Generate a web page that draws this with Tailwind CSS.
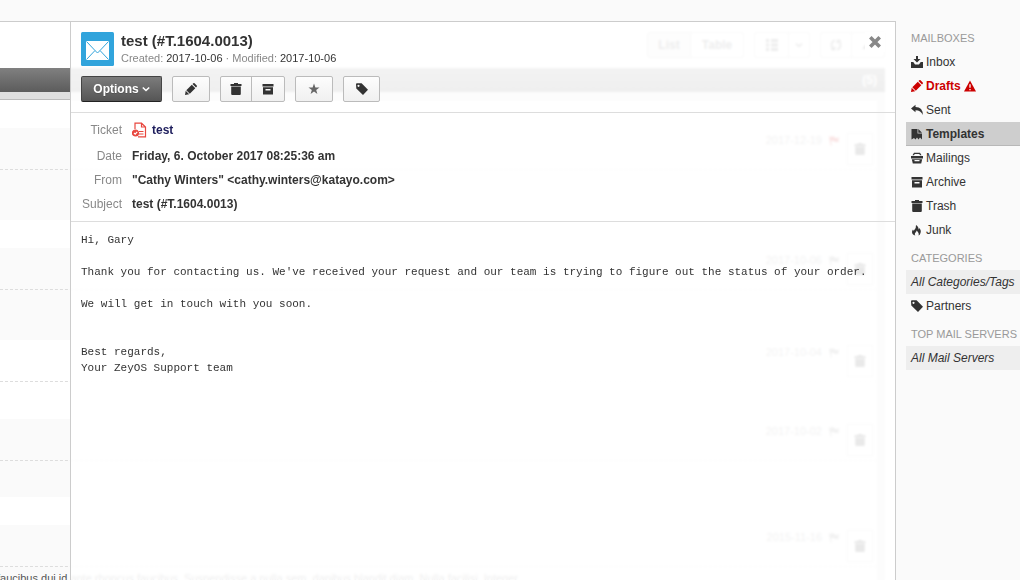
<!DOCTYPE html>
<html lang="en">

<head>
  <meta charset="UTF-8">
  <meta name="viewport" content="width=device-width, initial-scale=1.0">
  <title>test (#T.1604.0013)</title>
  <script src="https://cdn.jsdelivr.net/npm/@tailwindcss/browser@4"></script>
</head>

<body class="h-screen overflow-hidden bg-[#fafafa] font-['Liberation_Sans',Arial,sans-serif] text-xs text-[#333]">
  <!-- Icons -->
  <svg class="hidden">
    <symbol id="i-trash" viewBox="0 0 12 12">
      <path d="M4 0h4v1h3.500v2H.5V1H4zM1.200 3.600h9.600V11q0 1-1 1H2.200q-1 0-1-1z" />
    </symbol>
    <symbol id="i-archive" viewBox="0 0 12 12">
      <path fill-rule="evenodd" d="M.5 1h11v2.600H.5zM1 4.300h10V11.500H1zM3.500 6v1.500h5V6z" />
    </symbol>
    <symbol id="i-pencil" viewBox="0 0 12 12">
      <path d="M0 12l.7-4.200 3.500 3.500zM1.300 7.200L6.800 1.700l3.500 3.500-5.500 5.500zM7.500 1L8.300.3q.6-.6 1.300 0l2.100 2.100q.6.600 0 1.300l-.7.800z" />
    </symbol>
    <symbol id="i-tag" viewBox="0 0 12 12">
      <path fill-rule="evenodd" d="M0 1.300Q0 .3 1 .3h4.600L12 6.800 7 12 .3 5.500zM2.500 1.700a1.100 1.100 0 1 0 .01 0z" />
    </symbol>
    <symbol id="i-flag" viewBox="0 0 12 12">
      <path d="M0 1h1.500v.8Q4 0 6 1.800T11.500 2L10 5l1 1.500Q7.500 8 5.500 6.200 3.500 5 2.200 6.500L3 11H1.800z" />
    </symbol>
    <symbol id="i-chevron" viewBox="0 0 8 6">
      <path fill="none" stroke="currentColor" stroke-width="1.600" d="M.8 1.500L4 4.500l3.200-3" />
    </symbol>
  </svg>

  <div class="flex h-full pt-[21px]">
    <main class="relative min-w-0 flex-1 overflow-hidden border-t border-[#ccc] bg-white">
      <!-- Message list -->
      <div class="flex h-[46px] items-start justify-end gap-[10px] px-[11px] pt-[10px] font-bold text-[#444]">
        <div class="flex h-[26px] rounded-xs border border-[#bbb]">
          <button class="w-[43px] border-r border-[#bbb] bg-[#e8e8e8]">List</button>
          <button class="w-[52px]">Table</button>
        </div>
        <div class="flex h-[26px] rounded-xs border border-[#bbb]">
          <button class="flex w-[34px] items-center justify-center border-r border-[#bbb]" aria-label="View">
            <svg class="size-3" viewBox="0 0 12 12" fill="currentColor"><path d="M0 0h3v3H0zM5 0h7v3H5zM0 4.500h3v3H0zM5 4.500h7v3H5zM0 9h3v3H0zM5 9h7v3H5z" /></svg>
          </button>
          <button class="flex w-5 items-center justify-center" aria-label="More views"><svg class="h-[6px] w-2"><use href="#i-chevron" /></svg></button>
        </div>
        <div class="flex h-[26px] rounded-xs border border-[#bbb]">
          <button class="flex w-[31px] items-center justify-center border-r border-[#bbb]" aria-label="Refresh">
            <svg class="size-3" viewBox="0 0 12 12" fill="none" stroke="currentColor" stroke-width="1.600"><path d="M5 1.500Q1.500 2 1.500 6t2.500 4.500M1.500 10.500H4.500V7.500M7 10.500Q10.500 10 10.500 6T8 1.500M10.500 1.500H7.500v3" /></svg>
          </button>
          <button class="flex w-8 items-center justify-center" aria-label="Sort"><svg class="size-3" viewBox="0 0 12 12" fill="currentColor"><path d="M0 10l6-7 6 7z" /></svg></button>
        </div>
      </div>

      <div class="mr-[11px] flex h-6 items-center justify-end bg-linear-to-b from-[#808080] to-[#5c5c5c] pr-2 font-bold text-white">(5)</div>
      <div class="mr-[11px] bg-[#dfdfdf] pt-[7px] pr-2">
        <ul class="border-t border-[#bbb] bg-white">
          <li class="pt-7">
            <div class="bg-[#fafafa]">
              <div class="flex h-[42px] justify-end border-b border-dashed border-[#ddd] pt-1 pr-1 text-[11px] leading-4 text-[#777]">
                <time>2017-12-19</time>
                <svg class="mt-[3px] ml-[7px] h-3 w-[11px] fill-[#c00]"><use href="#i-flag" /></svg>
                <button class="mt-px ml-[7px] flex h-8 w-[26px] items-center justify-center border border-[#ccc] bg-white" aria-label="Delete"><svg class="size-3 fill-[#222]"><use href="#i-trash" /></svg></button>
              </div>
              <p class="h-[50px]"></p>
            </div>
          </li>
          <li class="pt-7">
            <div class="bg-[#fafafa]">
              <div class="flex h-[42px] justify-end border-b border-dashed border-[#ddd] pt-1 pr-1 text-[11px] leading-4 text-[#777]">
                <time>2017-10-06</time>
                <svg class="mt-[3px] ml-[7px] h-3 w-[11px] fill-[#777]"><use href="#i-flag" /></svg>
                <button class="mt-px ml-[7px] flex h-8 w-[26px] items-center justify-center border border-[#ccc] bg-white" aria-label="Delete"><svg class="size-3 fill-[#222]"><use href="#i-trash" /></svg></button>
              </div>
              <p class="h-[50px]"></p>
            </div>
          </li>
          <li>
            <div>
              <div class="flex h-[42px] justify-end border-b border-dashed border-[#ddd] pt-1 pr-1 text-[11px] leading-4 text-[#777]">
                <time>2017-10-04</time>
                <svg class="mt-[3px] ml-[7px] h-3 w-[11px] fill-[#777]"><use href="#i-flag" /></svg>
                <button class="mt-px ml-[7px] flex h-8 w-[26px] items-center justify-center border border-[#ccc] bg-white" aria-label="Delete"><svg class="size-3 fill-[#222]"><use href="#i-trash" /></svg></button>
              </div>
              <p class="h-[37px]"></p>
            </div>
          </li>
          <li>
            <div class="bg-[#fafafa]">
              <div class="flex h-[42px] justify-end border-b border-dashed border-[#ddd] pt-1 pr-1 text-[11px] leading-4 text-[#777]">
                <time>2017-10-02</time>
                <svg class="mt-[3px] ml-[7px] h-3 w-[11px] fill-[#777]"><use href="#i-flag" /></svg>
                <button class="mt-px ml-[7px] flex h-8 w-[26px] items-center justify-center border border-[#ccc] bg-white" aria-label="Delete"><svg class="size-3 fill-[#222]"><use href="#i-trash" /></svg></button>
              </div>
              <p class="h-9"></p>
            </div>
          </li>
          <li class="pt-7">
            <div class="bg-[#fafafa]">
              <div class="flex h-[42px] justify-end border-b border-dashed border-[#ddd] pt-1 pr-1 text-[11px] leading-4 text-[#777]">
                <time>2015-11-16</time>
                <svg class="mt-[3px] ml-[7px] h-3 w-[11px] fill-[#777]"><use href="#i-flag" /></svg>
                <button class="mt-px ml-[7px] flex h-8 w-[26px] items-center justify-center border border-[#ccc] bg-white" aria-label="Delete"><svg class="size-3 fill-[#222]"><use href="#i-trash" /></svg></button>
              </div>
              <p class="-ml-[3px] pt-[3px] text-[11px] leading-4 text-[#555]">faucibus dui id ante rhoncus faucibus. Suspendisse a nulla sem, dapibus blandit diam. Nulla facilisi. Integer…</p>
            </div>
          </li>
        </ul>
      </div>

      <!-- Opened message -->
      <article class="absolute inset-y-0 right-0 left-[70px] border-x border-[#ccc] bg-white/90 backdrop-blur-[1px]">
        <header class="relative border-b border-[#ddd] px-[10px] py-[10px]">
          <div class="flex gap-[7px]">
            <svg class="h-[34px] w-[33px]" viewBox="0 0 33 34">
              <rect width="33" height="34" rx="1.500" fill="#31a4dc" />
              <path fill="#fff" d="M5 9h23v19H5z" />
              <path fill="none" stroke="#31a4dc" stroke-width="1" d="M5.500 9.500l8.500 9 2.500 2.500 2.500-2.500 8.500-9M5.500 27.500l8.500-9M27.500 27.500l-8.500-9" />
            </svg>
            <div>
              <h1 class="text-[15px] leading-[18px] font-bold">test (#T.1604.0013)</h1>
              <p class="text-[11px] leading-4 text-[#888]">Created: <span class="text-[#333]">2017-10-06</span> · Modified: <span class="text-[#333]">2017-10-06</span></p>
            </div>
          </div>
          <button class="absolute top-[10px] right-[10px] flex size-5 items-center justify-center bg-white" aria-label="Close">
            <svg class="size-3" viewBox="0 0 12 12" fill="none" stroke="#888" stroke-width="3.600"><path d="M1.300 1.300l9.400 9.400M10.700 1.300l-9.400 9.400" /></svg>
          </button>
          <div class="mt-[10px] flex h-[26px] gap-[10px]">
            <button class="flex w-[81px] items-center justify-center gap-[3px] rounded-xs border border-[#444] border-b-[#222] bg-linear-to-b from-[#7c7c7c] to-[#555] font-bold text-white text-shadow-2xs">Options
              <svg class="h-[6px] w-2"><use href="#i-chevron" /></svg>
            </button>
            <button class="flex w-[38px] items-center justify-center rounded-xs border border-[#bbb] bg-linear-to-b from-[#fdfdfd] to-[#f0f0f0]" aria-label="Edit"><svg class="size-3 fill-[#333]"><use href="#i-pencil" /></svg></button>
            <div class="flex rounded-xs border border-[#bbb] bg-linear-to-b from-[#fdfdfd] to-[#f0f0f0]">
              <button class="flex w-[31px] items-center justify-center border-r border-[#bbb]" aria-label="Delete"><svg class="size-3 fill-[#333]"><use href="#i-trash" /></svg></button>
              <button class="flex w-8 items-center justify-center" aria-label="Archive"><svg class="size-3 fill-[#333]"><use href="#i-archive" /></svg></button>
            </div>
            <button class="flex w-[38px] items-center justify-center rounded-xs border border-[#bbb] bg-linear-to-b from-[#fdfdfd] to-[#f0f0f0]" aria-label="Star">
              <svg class="size-3" viewBox="0 0 12 12" fill="#666"><path d="M6 .5l1.400 3.900h4.100L8.200 6.900l1.200 4.100L6 8.600 2.600 11l1.200-4.100L.5 4.400h4.100z" /></svg>
            </button>
            <button class="flex w-[37px] items-center justify-center rounded-xs border border-[#bbb] bg-linear-to-b from-[#fdfdfd] to-[#f0f0f0]" aria-label="Tag"><svg class="size-3 fill-[#333]"><use href="#i-tag" /></svg></button>
          </div>
        </header>

        <dl class="grid grid-cols-[51px_1fr] gap-x-[10px] border-b border-[#ddd] py-[5px] leading-6 font-bold">
          <dt class="pb-[2px] text-right font-normal text-[#888]">Ticket</dt>
          <dd class="flex items-center gap-[5px] pb-[2px]">
            <svg class="h-4 w-[15px]" viewBox="0 0 15 16" fill="none" stroke="#e8473f" stroke-width="1.200">
              <path d="M3 7V1.200h6.500L13.500 5v9.800H6M9.500 1.200V5h4M7 9.500h4.500M7 12h4.500" />
              <circle cx="3.500" cy="11" r="3" fill="#e8473f" />
              <path stroke="#fff" d="M2 11l1.200 1.200L5.200 9.800" />
            </svg>
            <a href="#" class="text-[#1d1d5c]">test</a>
          </dd>
          <dt class="text-right font-normal text-[#888]">Date</dt>
          <dd>Friday, 6. October 2017 08:25:36 am</dd>
          <dt class="text-right font-normal text-[#888]">From</dt>
          <dd>"Cathy Winters" &lt;cathy.winters@katayo.com&gt;</dd>
          <dt class="text-right font-normal text-[#888]">Subject</dt>
          <dd>test (#T.1604.0013)</dd>
        </dl>

        <pre class="px-[10px] pt-[10px] font-['Liberation_Mono',monospace] text-[11px] leading-4 whitespace-pre-wrap">Hi, Gary

Thank you for contacting us. We've received your request and our team is trying to figure out the status of your order.

We will get in touch with you soon.


Best regards,
Your ZeyOS Support team</pre>
      </article>
    </main>

    <!-- Sidebar -->
    <aside class="w-[124px] shrink-0 overflow-hidden pt-px pl-[10px] leading-6 whitespace-nowrap">
      <h2 class="pt-2 pb-1 pl-[5px] text-[11px] leading-4 text-[#999]">MAILBOXES</h2>
      <nav>
        <a href="#" class="flex h-6 items-center gap-[3px] pl-[5px]">
          <svg class="size-3" viewBox="0 0 12 12" fill="#333"><path d="M5 0h2v3h2.500L6 6.500 2.500 3H5zM0 6h2.300L4 8.500h4L9.700 6H12v6H0z" /></svg>Inbox</a>
        <a href="#" class="flex h-6 items-center gap-[3px] pl-[5px] font-bold text-[#c00]">
          <svg class="size-3 fill-[#c00]"><use href="#i-pencil" /></svg>Drafts
          <svg class="h-3 w-3" viewBox="0 0 13 12"><path fill="#c00" d="M6.500 0L13 12H0z" /><path stroke="#fff" stroke-width="1.400" d="M6.500 4v4M6.500 9.200v1.400" /></svg>
        </a>
        <a href="#" class="flex h-6 items-center gap-[3px] pl-[5px]">
          <svg class="size-3" viewBox="0 0 12 12" fill="#333"><path d="M0 4.500L4.500 .8v2.200Q12 3 11.700 11 10 6.300 4.500 6.300v2z" /></svg>Sent</a>
        <a href="#" class="flex h-6 items-center gap-[3px] border-b border-[#b8b8b8] bg-[#cecece] pl-[5px] font-bold">
          <svg class="size-3" viewBox="0 0 12 12" fill="#333"><path d="M.5 1H6.500v4.500H11V11.500L9 9.500l-1.500 2L6 9.500l-1.500 2L3 10 .5 11.500zM7.300 1L11 4.700H7.300z" /></svg>Templates</a>
        <a href="#" class="flex h-6 items-center gap-[3px] pl-[5px]">
          <svg class="size-3" viewBox="0 0 12 12" fill="#333"><path fill-rule="evenodd" d="M3 .8h6l1.500 2.500h-1.500L8.300 2H3.700L3 3.300H1.500zM0 4h12v2.500H0zM.8 7.200h10.400L10.200 11.500H1.800zM3.500 8v1.300h5V8z" /></svg>Mailings</a>
        <a href="#" class="flex h-6 items-center gap-[3px] pl-[5px]">
          <svg class="size-3 fill-[#333]"><use href="#i-archive" /></svg>Archive</a>
        <a href="#" class="flex h-6 items-center gap-[3px] pl-[5px]">
          <svg class="size-3 fill-[#333]"><use href="#i-trash" /></svg>Trash</a>
        <a href="#" class="flex h-6 items-center gap-[3px] pl-[5px]">
          <svg class="size-3" viewBox="0 0 12 12" fill="#333"><path d="M5 1q3 2 2.500 4.500.7-.5.500-1.500 2.500 2 1.500 5Q9 11 7.500 11.500 8.500 9 5.500 6.500 5.500 8 4 9q-.5 1.500.3 2.500Q1 10.500 1 8q0-1.500 1-2.500.2 1 .8 1.300Q5.500 4 5 1z" /></svg>Junk</a>
      </nav>
      <h2 class="pt-2 pb-1 pl-[5px] text-[11px] leading-4 text-[#999]">CATEGORIES</h2>
      <nav>
        <a href="#" class="block bg-[#eee] pl-[5px] italic">All Categories/Tags</a>
        <a href="#" class="flex h-6 items-center gap-[3px] pl-[5px]">
          <svg class="size-3 fill-[#333]"><use href="#i-tag" /></svg>Partners</a>
      </nav>
      <h2 class="pt-2 pb-1 pl-[5px] text-[11px] leading-4 text-[#999]">TOP MAIL SERVERS</h2>
      <nav>
        <a href="#" class="block bg-[#eee] pl-[5px] italic">All Mail Servers</a>
      </nav>
    </aside>
  </div>
</body>

</html>
